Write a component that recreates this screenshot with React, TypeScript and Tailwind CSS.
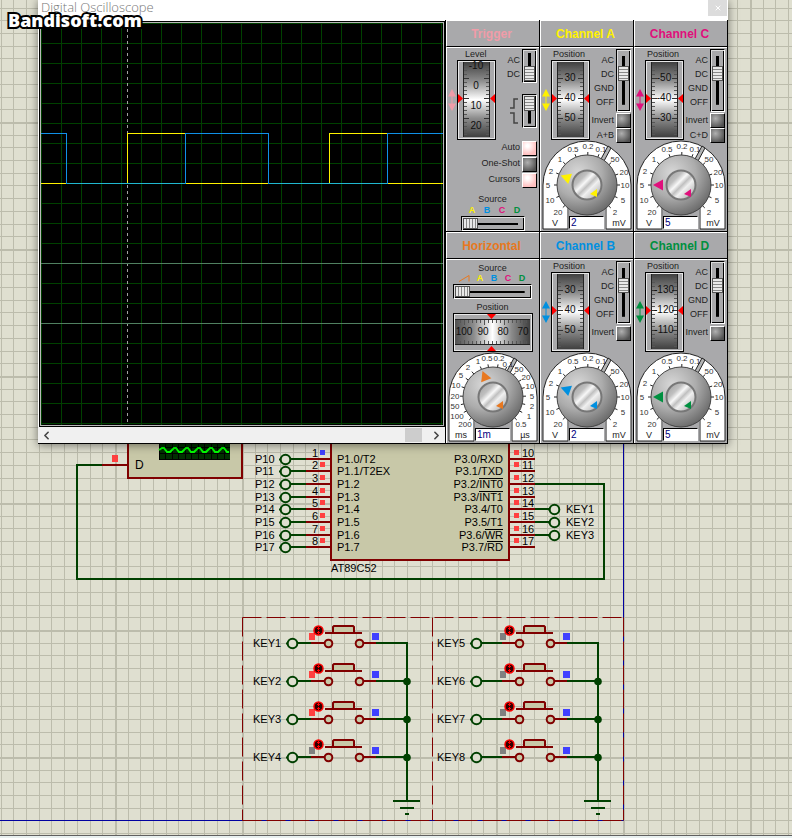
import type { ReactNode } from "react";
import { ChevronLeft, ChevronRight, X } from "lucide-react";

type Mark = [string, number, number];

const voltMarks: Mark[] = [
  ["20", -29, 27],
  ["10", -37, 15],
  ["5", -39, 0],
  ["2", -36, -14],
  ["1", -27, -26],
  ["0.5", -14, -36],
  ["0.2", 1, -39],
  ["0.1", 14, -36],
  ["50", 28, -26],
  ["20", 37, -13],
  ["10", 38, 0],
  ["5", 36, 15],
  ["2", 28, 27],
];

const timeMarks: Mark[] = [
  ["200", -28, 27],
  ["100", -36, 19],
  ["50", -38, 9],
  ["20", -38, -1],
  ["10", -37, -12],
  ["5", -32, -22],
  ["2", -25, -30],
  ["1", -15, -36],
  ["0.5", -6, -39],
  ["0.2", 6, -39],
  ["0.1", 15, -33],
  ["50", 26, -28],
  ["20", 33, -20],
  ["10", 37, -11],
  ["5", 39, -1],
  ["2", 39, 9],
  ["1", 36, 19],
  ["0.5", 28, 27],
];

const sources = [
  { name: "A", color: "text-[#fff200]" },
  { name: "B", color: "text-[#0090e0]" },
  { name: "C", color: "text-[#e0107c]" },
  { name: "D", color: "text-[#009040]" },
];

/* ---------- schematic ---------- */

const WIRE = "#004000";
const PART = "#800000";
const BODY = "#c8c8a8";
const HIGH = "#ff4040";
const LOW = "#4040ff";
const FLOAT = "#808080";

const gridSteps = [13, 25, 38, 51, 63, 76, 89, 102, 114];

const pinRows = [459, 471, 484, 497, 509, 522, 535, 547];
const leftPins = ["P1.0/T2", "P1.1/T2EX", "P1.2", "P1.3", "P1.4", "P1.5", "P1.6", "P1.7"];
const rightPins = [
  ["P3.0/RXD", ""],
  ["P3.1/TXD", ""],
  ["P3.2/", "INT0"],
  ["P3.3/", "INT1"],
  ["P3.4/T0", ""],
  ["P3.5/T1", ""],
  ["P3.6/", "WR"],
  ["P3.7/", "RD"],
];
const overlines: Record<string, number> = { INT0: 24, INT1: 24, WR: 18, RD: 16 };

function Terminal({ x, y }: { x: number; y: number }) {
  return (
    <g stroke={WIRE} strokeWidth="2">
      <circle cx={x} cy={y} r="4.8" fill="#dfdfd0" />
      <path d={`M${x - 6.5} ${y}h1`} />
    </g>
  );
}

function KeySwitch({ x, y, label, state }: { x: number; y: number; label: string; state: string }) {
  const lx = x === 0 ? 0 : x - 7;
  return (
    <g>
      <text x={253 + lx} y={y + 4}>{label}</text>
      <path d={`M${298 + lx} ${y}H${311 + x}M${376 + x} ${y}H${407 + x}`} stroke={WIRE} strokeWidth="2" />
      <path d={`M${311 + x} ${y}H${324 + x}M${364 + x} ${y}H${376 + x}`} stroke={PART} strokeWidth="2" />
      <Terminal x={292.5 + lx} y={y + 0.5} />
      <g fill={BODY} stroke={PART} strokeWidth="2">
        <circle cx={328.5 + x} cy={y + 0.5} r="3.8" />
        <circle cx={359.5 + x} cy={y + 0.5} r="3.8" />
        <path d={`M${333 + x} ${y - 10}v-6l1-1h19l1 1v6`} />
        <path d={`M${325 + x} ${y - 10}h37`} />
      </g>
      <rect x={309 + x} y={y - 10} width="6" height="7" fill={state} />
      <rect x={372 + x} y={y - 10} width="7" height="7" fill={LOW} />
      <circle cx={318.5 + x} cy={y - 12.5} r="4.5" fill="#300000" stroke="#ff0000" strokeWidth="1.5" />
      <path d={`M${318.5 + x} ${y - 16}v3m0 1v3M${317 + x} ${y - 14.5}h3m-3 4h3`} stroke="#ff0000" />
    </g>
  );
}

function Schematic() {
  return (
    <svg className="block h-full w-full font-['Liberation_Sans',sans-serif] text-[11px]">
      <defs>
        <pattern id="grid" x="-12" y="-5" width="127" height="127" patternUnits="userSpaceOnUse">
          {gridSteps.map((s) => (
            <path key={s} d={`M${s + 0.5} 0V127M0 ${s + 0.5}H127`} stroke="#bcbcac" />
          ))}
          <path d="M0 1H127M1 0V127" stroke="#bcbcac" strokeWidth="2" />
        </pattern>
      </defs>
      <rect width="100%" height="100%" fill="#dfdfd0" />
      <rect width="100%" height="100%" fill="url(#grid)" shapeRendering="crispEdges" />

      {/* sheet edge */}
      <path d="M623.5 0V820.5H0" fill="none" stroke="#0000a0" />

      {/* scope part */}
      <rect x="128" y="380" width="114" height="98" fill={BODY} stroke={PART} strokeWidth="2" />
      <rect x="159" y="430" width="71" height="30" fill="#003000" />
      <path
        d="M159 447.5h71M159 453.5h71M165.5 440v20M172.5 440v20M178.5 440v20M185.5 440v20M191.5 440v20M198.5 440v20M204.5 440v20M211.5 440v20M217.5 440v20M224.5 440v20M159 459.5h71M159.5 440v20"
        stroke="#000"
      />
      <path
        d="M159 450l3-2h2l3 4h3l4-4h2l3 4h3l4-4h2l3 4h3l4-4h2l3 4h3l4-4h2l3 4h3l4-4h2l3 4h2"
        fill="none"
        stroke="#00ff00"
        strokeWidth="2"
      />
      <text x="135" y="469" className="text-[12px]">D</text>
      <path d="M102 465H127" stroke={PART} strokeWidth="2" />
      <path d="M102 465H77V579H604V484H535" fill="none" stroke={WIRE} strokeWidth="2" />
      <rect x="112" y="455" width="6" height="7" fill={HIGH} />

      {/* AT89C52 */}
      <rect x="331" y="380" width="178" height="180" fill={BODY} stroke={PART} strokeWidth="2" />
      <text x="331" y="572">AT89C52</text>
      {pinRows.map((y, i) => (
        <g key={y}>
          <text x="255" y={y + 4}>{`P1${i}`}</text>
          <path d={`M291 ${y}H306`} stroke={WIRE} strokeWidth="2" />
          <path d={`M306 ${y}H331M509 ${y}H535`} stroke={PART} strokeWidth="2" />
          <Terminal x={285.5} y={y + 0.5} />
          <text x="312" y={y - 2}>{i + 1}</text>
          <rect x="320" y={y - 9} width="5" height="5" fill={i === 0 ? LOW : HIGH} />
          <text x="337" y={y + 4}>{leftPins[i]}</text>
          <text x="503" y={y + 4} textAnchor="end">{rightPins[i].join("")}</text>
          {rightPins[i][1] && (
            <path d={`M${503 - overlines[rightPins[i][1]]} ${y - 5.5}H503`} stroke="#000" />
          )}
          <rect x="514" y={y - 9} width="5" height="5" fill={HIGH} />
          <text x="522" y={y - 2}>{i + 10}</text>
        </g>
      ))}
      {[509, 522, 535].map((y, i) => (
        <g key={y}>
          <path d={`M535 ${y}H549`} stroke={WIRE} strokeWidth="2" />
          <Terminal x={554.5} y={y + 0.5} />
          <text x="566" y={y + 4}>{`KEY${i + 1}`}</text>
        </g>
      ))}

      {/* key block */}
      <path
        d="M242.5 617.5H623.5M242.5 617.5V820.5M432.5 617.5V820.5M242.5 820.5H623.5M623.5 617.5V820.5"
        stroke={PART}
        strokeDasharray="19 5"
      />
      {[0, 191].map((x, col) => (
        <g key={x}>
          <path d={`M${407 + x} 642V801`} stroke={WIRE} strokeWidth="2" />
          <path d={`M${393 + x} 801h27M${400 + x} 808h14M${405 + x} 814h4`} stroke={WIRE} strokeWidth="2" />
          {[643, 681, 719, 757].map((y, row) => (
            <g key={y}>
              <KeySwitch
                x={x}
                y={y}
                label={`KEY${col * 4 + row + 1}`}
                state={col === 0 && row < 3 ? HIGH : FLOAT}
              />
              {row > 0 && <circle cx={407 + x} cy={y + 0.5} r="3.8" fill={WIRE} />}
            </g>
          ))}
        </g>
      ))}
    </svg>
  );
}

/* ---------- scope screen ---------- */

function Screen() {
  return (
    <svg viewBox="0 0 402 402" className="block w-full bg-black" shapeRendering="crispEdges">
      <defs>
        <pattern id="graticule" width="20" height="20" patternUnits="userSpaceOnUse">
          <path d="M.5 0V20M0 .5H20" stroke="#004000" />
        </pattern>
      </defs>
      <rect width="402" height="402" fill="url(#graticule)" />
      <path d="M86.5 0V402" stroke="#a0a0a0" strokeDasharray="3 3" />
      <path d="M0 240.5H402M0 300.5H402" stroke="#508060" />
      <g fill="none">
        <path d="M0 160.5H86.5V110.5H144.5V160.5H288.5V110.5H346.5V160.5H402" stroke="#fff200" />
        <path d="M0 110.5H25.5V160.5H144.5V110.5H227.5V160.5H346.5V110.5H402" stroke="#1090e8" />
        <path d="M26 160.5H144M228 160.5H346" stroke="#20b8d0" />
      </g>
    </svg>
  );
}

/* ---------- instrument controls ---------- */

function Wheel({ labels, offset = 0 }: { labels: string[]; offset?: number }) {
  return (
    <svg viewBox="0 0 39 80" className="block h-20 w-[39px]">
      <rect width="39" height="80" fill="#000" />
      <rect x="1" y="1" width="37" height="78" fill="#e8e8e8" />
      <rect x="2" y="2" width="35" height="76" fill="#a9a9ab" />
      <rect x="7" y="2" width="25" height="75" fill="url(#wheel)" />
      <path d="M6.5 2V77M32.5 2V77" stroke="#222" />
      <path
        d="M7 6.5h3M7 10.5h3M7 14.5h3M7 22.5h3M7 26.5h3M7 30.5h3M7 34.5h3M7 42.5h3M7 46.5h3M7 50.5h3M7 54.5h3M7 62.5h3M7 66.5h3M7 70.5h3M7 74.5h3M29 6.5h3M29 10.5h3M29 14.5h3M29 22.5h3M29 26.5h3M29 30.5h3M29 34.5h3M29 42.5h3M29 46.5h3M29 50.5h3M29 54.5h3M29 62.5h3M29 66.5h3M29 70.5h3M29 74.5h3"
        stroke="#555"
      />
      <path d="M7 18.5h5M7 38.5h5M7 58.5h5M27 18.5h5M27 38.5h5M27 58.5h5" stroke="#333" />
      {labels.map((label, i) => (
        <text key={label} x="19" y={21 + offset + i * 20} textAnchor="middle" className="text-[10px]" fill="#101010">
          {label}
        </text>
      ))}
      <path d="M1 34v9l5-4.5zM38 34v9l-5-4.5z" fill="#ff0000" />
    </svg>
  );
}

function TimeWheel() {
  return (
    <svg viewBox="0 0 80 39" className="block h-[39px] w-20">
      <rect width="80" height="39" fill="#000" />
      <rect x="1" y="1" width="78" height="37" fill="#e8e8e8" />
      <rect x="2" y="2" width="76" height="35" fill="#a9a9ab" />
      <rect x="2" y="7" width="75" height="24" fill="url(#timewheel)" />
      <path d="M2 6.5H77M2 31.5H77" stroke="#222" />
      <path
        d="M7.5 7v3M15.5 7v3M19.5 7v3M23.5 7v3M27.5 7v3M35.5 7v3M39.5 7v3M43.5 7v3M47.5 7v3M55.5 7v3M59.5 7v3M63.5 7v3M67.5 7v3M73.5 7v3M7.5 28v3M15.5 28v3M19.5 28v3M23.5 28v3M27.5 28v3M35.5 28v3M39.5 28v3M43.5 28v3M47.5 28v3M55.5 28v3M59.5 28v3M63.5 28v3M67.5 28v3M73.5 28v3M11.5 7v5M31.5 7v5M51.5 7v5M70.5 7v5M11.5 27v4M31.5 27v4M51.5 27v4M70.5 27v4"
        stroke="#555"
      />
      {["100", "90", "80", "70"].map((label, i) => (
        <text key={label} x={11 + i * 20 - (i ? 1 : 0)} y="22" textAnchor="middle" className="text-[10px]" fill="#101010">
          {label}
        </text>
      ))}
      <path d="M34 1h9l-4.5 5zM34 38h9l-4.5-5z" fill="#ff0000" />
    </svg>
  );
}

function Arrows({ className }: { className: string }) {
  return (
    <svg viewBox="0 0 8 22" className={`h-[22px] w-2 ${className}`}>
      <path d="M0 7.5L4 0l4 7.5zM0 14.5h8L4 22z" fill="currentColor" />
      <path d="M4 6V16" stroke="currentColor" />
    </svg>
  );
}

function VSwitch({ label, max, value, tall }: { label: string; max: number; value: number; tall?: boolean }) {
  return (
    <input
      type="range"
      aria-label={label}
      min={0}
      max={max}
      defaultValue={value}
      className={`${tall ? "h-[63px]" : "h-[34px]"} m-0 block w-[15px] appearance-none border border-black border-r-white border-b-white bg-[linear-gradient(#000,#000)] bg-[length:3px_80%] bg-center bg-no-repeat p-px shadow-[inset_1px_1px_0_#ddd,inset_-1px_-1px_0_#000] [writing-mode:vertical-lr] [&::-webkit-slider-thumb]:h-[15px] [&::-webkit-slider-thumb]:w-[11px] [&::-webkit-slider-thumb]:appearance-none [&::-webkit-slider-thumb]:border [&::-webkit-slider-thumb]:border-[#555] [&::-webkit-slider-thumb]:bg-[repeating-linear-gradient(#e8e8e8_0_2px,#888_2px_3px)]`}
    />
  );
}

function HSwitch({ label, max, wide }: { label: string; max: number; wide?: boolean }) {
  return (
    <input
      type="range"
      aria-label={label}
      min={0}
      max={max}
      defaultValue={0}
      className={`${wide ? "w-[79px]" : "w-16"} m-0 block h-[15px] appearance-none border border-black border-r-white border-b-white bg-[linear-gradient(#000,#000)] bg-[length:84%_2px] bg-center bg-no-repeat p-px shadow-[inset_1px_1px_0_#ddd,inset_-1px_-1px_0_#000] [&::-webkit-slider-thumb]:h-[11px] [&::-webkit-slider-thumb]:w-[15px] [&::-webkit-slider-thumb]:appearance-none [&::-webkit-slider-thumb]:border [&::-webkit-slider-thumb]:border-[#555] [&::-webkit-slider-thumb]:bg-[repeating-linear-gradient(90deg,#e8e8e8_0_2px,#888_2px_3px)]`}
    />
  );
}

function Toggle({ label, on }: { label: string; on?: boolean }) {
  return (
    <label className="flex h-4 items-center justify-end gap-[2px]">
      {label}
      <input
        type="checkbox"
        defaultChecked={on}
        className="m-0 block size-[15px] appearance-none border border-t-white border-r-black border-b-black border-l-white bg-[radial-gradient(circle_at_35%_35%,#b0b0b0,#505050_80%)] checked:bg-[radial-gradient(circle_at_35%_30%,#fff_10%,#ffc0c0_70%)]"
      />
    </label>
  );
}

function Knob({
  marks,
  units,
  value,
  name,
  color,
  pointer,
}: {
  marks: Mark[];
  units: [string, string];
  value: string;
  name: string;
  color: string;
  pointer: number;
}) {
  return (
    <div className="mx-auto grid w-[90px]">
      <svg viewBox="-45 -45 90 90" className={`col-start-1 row-start-1 block h-[90px] w-[90px] ${color}`}>
        <path d="M-44 44V0A44 44 0 0 1 44 0V44H19V22H-19V44Z" fill="#fff" stroke="#222" />
        <path d="M14 -26L21 -39L24 -37L17 -24Z" fill="#b4b4b4" stroke="#222" />
        {marks.map(([label, x, y]) => {
          const r = Math.hypot(x, y);
          return (
            <g key={`${label}${x}`}>
              <path
                d={`M${(x / r) * 29} ${(y / r) * 29}L${(x / r) * 33} ${(y / r) * 33}`}
                stroke="#222"
              />
              <text x={x} y={y + 3} textAnchor="middle" className="text-[8px]" fill="#333">
                {label}
              </text>
            </g>
          );
        })}
        <rect x="-18.5" y="22" width="37" height="22" fill="#a9a9ab" />
        <circle r="30" fill="url(#knob)" stroke="#444" />
        <circle r="14.5" fill="url(#cap)" stroke="#777" strokeWidth="2" />
        <path d="M-28 0L-18 -5.5V5.5Z" fill="currentColor" transform={`rotate(${pointer})`} />
        <path d="M3 9L10 4V12Z" fill="currentColor" />
        <text x="-32" y="41" textAnchor="middle" className="text-[9px]" fill="#222">{units[0]}</text>
        <text x="32" y="41" textAnchor="middle" className="text-[9px]" fill="#222">{units[1]}</text>
      </svg>
      <input
        type="text"
        aria-label={`${name} scale`}
        defaultValue={value}
        className="col-start-1 row-start-1 mb-px h-[13px] w-[35px] self-end justify-self-center border border-black border-r-white border-b-white bg-white px-px text-[10px] leading-none text-[#000080]"
      />
    </div>
  );
}

function Panel({ title, color, children }: { title: string; color: string; children: ReactNode }) {
  return (
    <section className="flex h-[212px] flex-col border-b border-l border-black bg-[#a9a9ab]">
      <h2
        className={`flex h-[27px] items-center justify-center border-t border-b border-l border-t-white border-b-black border-l-white pt-px pr-[3px] text-[12px] leading-none font-bold ${color}`}
      >
        {title}
      </h2>
      <div className="flex flex-1 flex-col border-t border-l border-white pr-px">{children}</div>
    </section>
  );
}

function Channel({
  name,
  color,
  labels,
  sum,
  value,
  pointer,
}: {
  name: string;
  color: string;
  labels: string[];
  sum?: string;
  value: string;
  pointer: number;
}) {
  return (
    <Panel title={`Channel ${name}`} color={color}>
      <div className="flex h-[92px] justify-between pr-px pl-px">
        <div className="flex flex-col">
          <span className="pt-px pl-[11px] leading-[11px]">Position</span>
          <div className="flex items-center gap-px">
            <Arrows className={color} />
            <Wheel labels={labels} />
          </div>
        </div>
        <div className="-ml-3 flex flex-1 flex-col">
          <div className="flex justify-end gap-[2px] pt-px pb-px">
            <div className="pt-1 text-right leading-[14px]">
              <div>AC</div>
              <div>DC</div>
              <div>GND</div>
              <div>OFF</div>
            </div>
            <VSwitch label={`${name} coupling`} max={3} value={1} tall />
          </div>
          <Toggle label="Invert" />
          {sum && <Toggle label={sum} />}
        </div>
      </div>
      <Knob marks={voltMarks} units={["V", "mV"]} value={value} name={`Channel ${name}`} color={color} pointer={pointer} />
    </Panel>
  );
}

function SourceLetters() {
  return (
    <>
      {sources.map((s) => (
        <span key={s.name} className={`w-2 text-center font-bold ${s.color}`}>
          {s.name}
        </span>
      ))}
    </>
  );
}

function Trigger() {
  return (
    <Panel title="Trigger" color="text-[#f09ca8]">
      <div className="flex h-[92px] justify-between pr-px pl-px">
        <div className="flex flex-col">
          <span className="pt-px pl-[17px] leading-[11px]">Level</span>
          <div className="flex items-center gap-px">
            <Arrows className="text-[#f09ca8]" />
            <Wheel labels={["-10", "0", "10", "20"]} offset={-12} />
          </div>
        </div>
        <div className="flex flex-col gap-[11px] pt-px">
          <div className="flex justify-end gap-[2px]">
            <div className="pt-1 text-right leading-[14px]">
              <div>AC</div>
              <div>DC</div>
            </div>
            <VSwitch label="Trigger coupling" max={1} value={1} />
          </div>
          <div className="flex justify-end gap-1">
            <svg viewBox="0 0 8 34" className="h-[34px] w-2" fill="none" stroke="#444" strokeWidth="1.5">
              <path d="M0 14H4V5H8M0 19H4V29H8" />
            </svg>
            <VSwitch label="Trigger edge" max={1} value={0} />
          </div>
        </div>
      </div>
      <div className="pr-px">
        <Toggle label="Auto" on />
        <Toggle label="One-Shot" />
        <Toggle label="Cursors" on />
      </div>
      <div className="flex flex-col items-center pt-[6px]">
        <span className="leading-[11px]">Source</span>
        <div className="flex gap-[7px] pl-1 leading-[11px]">
          <SourceLetters />
        </div>
        <HSwitch label="Trigger source" max={3} />
      </div>
    </Panel>
  );
}

function Horizontal() {
  return (
    <Panel title="Horizontal" color="text-[#e87820]">
      <div className="flex h-[92px] flex-col items-center pt-[3px]">
        <span className="leading-[11px]">Source</span>
        <div className="flex items-center gap-[6px] leading-[9px]">
          <svg viewBox="0 0 11 7" className="h-[7px] w-[11px]" fill="none" stroke="#e87820">
            <path d="M0 6.5L10 .5V6.5" />
          </svg>
          <SourceLetters />
        </div>
        <div className="pt-px">
          <HSwitch label="Sweep source" max={4} wide />
        </div>
        <span className="pt-[3px] leading-[11px]">Position</span>
        <TimeWheel />
      </div>
      <Knob marks={timeMarks} units={["ms", "µs"]} value="1m" name="Horizontal" color="text-[#e87820]" pointer={68} />
    </Panel>
  );
}

function Oscilloscope() {
  return (
    <div className="absolute top-0 left-[38px] w-[690px] bg-white shadow-[0_1px_9px_rgba(0,0,0,0.5)]">
      <div className="flex h-5 items-start justify-between">
        <h1 className="pl-[3px] font-['Open_Sans',sans-serif] text-[13px] leading-[15px] font-light text-[#777]">
          Digital Oscilloscope
        </h1>
        <button type="button" aria-label="Close" className="mr-px flex h-4 w-[19px] items-center justify-center bg-[#dcdcdc] text-white">
          <X size={8} strokeWidth={3} />
        </button>
      </div>
      <div className="flex">
        <div className="flex w-[407px] flex-col border-b border-black pt-px">
          <div className="ml-px border border-black">
            <div className="border border-[#b8b8b8]">
              <Screen />
            </div>
          </div>
          <div className="flex h-4 items-center justify-between bg-[#f0f0f0] px-[2px] text-[#444]">
            <button type="button" aria-label="Scroll left">
              <ChevronLeft size={13} strokeWidth={3} />
            </button>
            <div className="ml-auto h-[14px] w-[17px] bg-[#cdcdcd]" />
            <button type="button" aria-label="Scroll right" className="ml-2">
              <ChevronRight size={13} strokeWidth={3} />
            </button>
          </div>
        </div>
        <div className="grid flex-1 grid-cols-3 border-r border-black text-[9px] text-[#222]">
          <Trigger />
          <Channel name="A" color="text-[#fff200]" labels={["30", "40", "50"]} sum="A+B" value="2" pointer={20} />
          <Channel name="C" color="text-[#e0107c]" labels={["-50", "-40", "-30"]} sum="C+D" value="5" pointer={0} />
          <Horizontal />
          <Channel name="B" color="text-[#0090e0]" labels={["30", "40", "50"]} value="2" pointer={20} />
          <Channel name="D" color="text-[#009040]" labels={["-130", "-120", "-110"]} value="5" pointer={0} />
        </div>
      </div>
    </div>
  );
}

function Gradients() {
  return (
    <svg className="absolute size-0">
      <defs>
        <linearGradient id="wheel" x1="0" y1="0" x2="0" y2="1">
          <stop offset="0" stopColor="#404040" />
          <stop offset=".25" stopColor="#8c8c8c" />
          <stop offset=".5" stopColor="#ffffff" />
          <stop offset=".75" stopColor="#8c8c8c" />
          <stop offset="1" stopColor="#404040" />
        </linearGradient>
        <linearGradient id="timewheel">
          <stop offset="0" stopColor="#505050" />
          <stop offset=".25" stopColor="#8c8c8c" />
          <stop offset=".5" stopColor="#ffffff" />
          <stop offset=".75" stopColor="#8c8c8c" />
          <stop offset="1" stopColor="#404040" />
        </linearGradient>
        <radialGradient id="knob" cx=".35" cy=".3" r=".8">
          <stop offset="0" stopColor="#d8d8d8" />
          <stop offset=".5" stopColor="#acacac" />
          <stop offset="1" stopColor="#606060" />
        </radialGradient>
        <linearGradient id="cap" x1="0" y1="0" x2="1" y2="1">
          <stop offset="0" stopColor="#989898" />
          <stop offset=".3" stopColor="#c0c0c0" />
          <stop offset=".42" stopColor="#f8f8f8" />
          <stop offset=".52" stopColor="#c0c0c0" />
          <stop offset=".62" stopColor="#f0f0f0" />
          <stop offset="1" stopColor="#989898" />
        </linearGradient>
      </defs>
    </svg>
  );
}

export default function App() {
  return (
    <main className="relative flex h-screen flex-col overflow-hidden font-['Liberation_Sans',sans-serif]">
      <Gradients />
      <div className="min-h-0 flex-1">
        <Schematic />
      </div>
      <div className="h-[3px] border-t border-[#606060] bg-[#e8f0f0]" />
      <Oscilloscope />
      <span className="absolute top-2 left-2 font-['Open_Sans',sans-serif] text-[18px] leading-6 font-extrabold text-white [-webkit-text-stroke:4px_#000] [paint-order:stroke_fill]">
        Bandisoft.com
      </span>
    </main>
  );
}
